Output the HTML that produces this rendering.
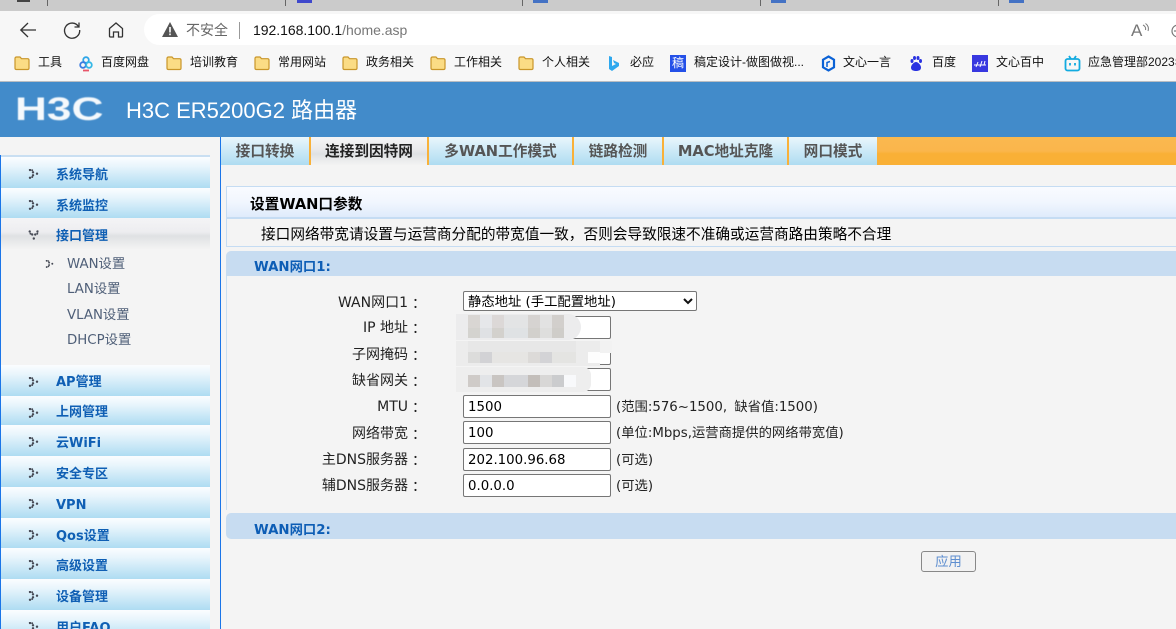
<!DOCTYPE html>
<html lang="zh-CN"><head><meta charset="utf-8"><title>H3C ER5200G2</title>
<style>
html,body{margin:0;padding:0;width:1176px;height:629px;overflow:hidden;background:#f4f4f4}
body{position:relative;font-family:"Liberation Sans","Noto Sans CJK SC",sans-serif;color:#000}
.a{position:absolute;white-space:nowrap}
.bm{position:absolute;top:54px;font-size:12px;line-height:17px;color:#111;white-space:nowrap}
.fo{position:absolute;top:55px}
.w{font-family:"DejaVu Sans","Noto Sans CJK SC",sans-serif}
.it{position:absolute;left:1px;width:209px;height:31px;background:linear-gradient(#fbfdff 0,#e8f5fc 30%,#aedcf2 100%);font:bold 13px/31px "DejaVu Sans","Noto Sans CJK SC",sans-serif;color:#0f5fb4}
.it span{position:absolute;left:55px;top:3px}
.it svg{position:absolute;left:27px;top:12px;filter:blur(.25px)}
.sub{position:absolute;left:67px;font:13.33px/18px "DejaVu Sans","Noto Sans CJK SC",sans-serif;color:#4f5f78;white-space:nowrap}
.tab{position:absolute;top:137px;height:28px;background:linear-gradient(#e9f6fc,#aedcf1);font:bold 14.67px/30px "DejaVu Sans","Noto Sans CJK SC",sans-serif;color:#555;text-align:center;border-right:2px solid #f9b139;box-sizing:border-box}
.lb{position:absolute;right:768px;font:14px/18px "DejaVu Sans","Noto Sans CJK SC",sans-serif;color:#222;white-space:nowrap}
.cl{position:absolute;left:412px;font:14px/18px "Noto Sans CJK SC",sans-serif;color:#222}
.in{position:absolute;left:463px;width:148px;height:23px;box-sizing:border-box;background:#fff;border:1px solid #767676;border-radius:2px;font:13.33px/23px "DejaVu Sans",sans-serif;padding-left:4px;color:#000}
.nt{position:absolute;left:616px;font:13.33px/18px "DejaVu Sans","Noto Sans CJK SC",sans-serif;color:#222;white-space:nowrap}
.b{position:absolute}
</style></head><body>
<svg width="0" height="0" style="position:absolute"><defs>
<symbol id="d" viewBox="0 0 11 10"><g fill="#464a55"><circle cx="2" cy="1" r="1.200"/><circle cx="4.200" cy="1.300" r="1"/><circle cx="5" cy="3.300" r="1.200"/><circle cx="9" cy="4.700" r="1.200"/><circle cx="5" cy="6.300" r="1.200"/><circle cx="2" cy="8.800" r="1.200"/><circle cx="4.200" cy="8" r="1"/></g></symbol>
<symbol id="f" viewBox="0 0 16 16"><path d="M1 3.500C1 2.700 1.600 2 2.400 2H6l1.500 1.700h6.100c.8 0 1.400.6 1.400 1.400v8c0 .8-.6 1.400-1.400 1.400H2.400c-.8 0-1.400-.6-1.400-1.400z" fill="#fbdc85" stroke="#c9962a" stroke-width="1.200"/></symbol>
</defs></svg>

<!-- tab strip -->
<div class="b" style="left:0;top:0;width:1176px;height:11px;background:#cbcbcb"></div>
<div class="b" style="left:47px;top:0;width:1px;height:6px;background:#666"></div>
<div class="b" style="left:285px;top:0;width:1px;height:6px;background:#666"></div>
<div class="b" style="left:522px;top:0;width:1px;height:6px;background:#666"></div>
<div class="b" style="left:760px;top:0;width:1px;height:6px;background:#666"></div>
<div class="b" style="left:998px;top:0;width:1px;height:6px;background:#666"></div>
<div class="b" style="left:17px;top:0;width:13px;height:2px;background:#444"></div>
<div class="b" style="left:297px;top:0;width:15px;height:3px;background:#3f48cc"></div>
<div class="b" style="left:533px;top:0;width:15px;height:3px;background:#4472c4"></div>
<div class="b" style="left:771px;top:0;width:15px;height:3px;background:#4472c4"></div>
<div class="b" style="left:1009px;top:0;width:15px;height:3px;background:#4472c4"></div>

<!-- toolbar -->
<div class="b" style="left:0;top:11px;width:1176px;height:34px;background:#f7f7f7"></div>
<div class="b" style="left:144px;top:14px;width:1040px;height:31px;background:#fff;border-radius:16px 0 0 16px"></div>
<svg class="b" style="left:18px;top:20px" width="20" height="20" viewBox="0 0 20 20" fill="none" stroke="#333" stroke-width="1.300"><path d="M18 10H3M10 3l-7.200 7 7.200 7"/></svg>
<svg class="b" style="left:62px;top:20px" width="20" height="20" viewBox="0 0 20 20" fill="none" stroke="#333" stroke-width="1.300"><path d="M16.500 6.500A7.600 7.600 0 1 0 17.700 10"/><path d="M17 2.500v4.500h-4.500"/></svg>
<svg class="b" style="left:107px;top:21px" width="18" height="18" viewBox="0 0 18 18" fill="none" stroke="#333" stroke-width="1.300"><path d="M2.500 7.500L9 2l6.500 5.500V15a1 1 0 0 1-1 1h-3v-5h-5v5h-3a1 1 0 0 1-1-1z"/></svg>
<svg class="b" style="left:162px;top:22px" width="16" height="15" viewBox="0 0 16 15"><path d="M8 0l8 15H0z" fill="#555"/><rect x="7.200" y="5" width="1.600" height="5.500" fill="#fff"/><rect x="7.200" y="11.500" width="1.600" height="1.700" fill="#fff"/></svg>
<div class="a" style="left:186px;top:21px;font-size:14px;line-height:18px;color:#666">不安全</div>
<div class="b" style="left:239px;top:22px;width:1px;height:17px;background:#999"></div>
<div class="a" style="left:253px;top:21px;font-size:14px;line-height:18px;letter-spacing:-.03px;color:#111">192.168.100.1<span style="color:#777">/home.asp</span></div>
<div class="a" style="left:1131px;top:21px;font-size:17px;line-height:20px;color:#777">A</div>
<svg class="b" style="left:1142px;top:23px" width="8" height="11" viewBox="0 0 8 11" fill="none" stroke="#777"><path d="M1 2c2 1 3 3 2.500 5M3.500 0.500c2.500 1.500 3.500 4.500 2.500 7.500"/></svg>
<svg class="b" style="left:1171px;top:23px" width="5" height="16" viewBox="0 0 5 16" fill="none" stroke="#777" stroke-width="1.200"><circle cx="7" cy="8" r="6"/><path d="M3 8h4"/></svg>

<!-- bookmarks -->
<div class="b" style="left:0;top:45px;width:1176px;height:36px;background:#f7f7f7"></div>
<div class="b" style="left:0;top:81px;width:1176px;height:1px;background:#b9bdc2"></div>
<svg class="fo" style="left:14px" width="16" height="16"><use href="#f"/></svg>
<svg class="fo" style="left:166px" width="16" height="16"><use href="#f"/></svg>
<svg class="fo" style="left:254px" width="16" height="16"><use href="#f"/></svg>
<svg class="fo" style="left:342px" width="16" height="16"><use href="#f"/></svg>
<svg class="fo" style="left:430px" width="16" height="16"><use href="#f"/></svg>
<svg class="fo" style="left:518px" width="16" height="16"><use href="#f"/></svg>
<svg class="b" style="left:78px;top:55px" width="16" height="17" viewBox="0 0 16 17" fill="none" stroke-width="1.800"><circle cx="8" cy="5" r="2.800" stroke="#2ea6e8"/><circle cx="5" cy="10" r="2.800" stroke="#3a7be0"/><circle cx="11" cy="10" r="2.800" stroke="#35b8e6"/><path d="M5 15.500h6" stroke="#e8556a"/></svg>
<svg class="b" style="left:608px;top:55px" width="12" height="17" viewBox="0 0 12 17"><path d="M1 1l3 1v9l4-2-2-1-1-3 6 3v3l-7 5-3-2z" fill="#2ea8ee"/></svg>
<div class="b" style="left:670px;top:55px;width:16px;height:17px;background:#2450e8;color:#fff;font-size:12px;line-height:17px;text-align:center">稿</div>
<svg class="b" style="left:821px;top:55px" width="15" height="17" viewBox="0 0 15 17" fill="none"><path d="M7.500 1.500l5.500 3.200v7.600l-5.500 3.200L2 12.300V4.700z" stroke="#0b62d6" stroke-width="2.200"/><path d="M6 12V7.500l3-1" stroke="#0b62d6" stroke-width="1.500"/></svg>
<svg class="b" style="left:909px;top:55px" width="14" height="17" viewBox="0 0 14 17" fill="#2932e1"><ellipse cx="3" cy="6" rx="1.500" ry="2"/><ellipse cx="5.500" cy="3" rx="1.500" ry="2"/><ellipse cx="9" cy="3" rx="1.500" ry="2"/><ellipse cx="11.500" cy="6" rx="1.500" ry="2"/><path d="M7 7c-2 0-5 3-5 5.500S4 16 7 16s5-1 5-3.500S9 7 7 7z"/></svg>
<div class="b" style="left:972px;top:55px;width:16px;height:17px;background:#3838e0"></div>
<svg class="b" style="left:972px;top:55px" width="16" height="17" viewBox="0 0 16 17" fill="none" stroke="#fff"><path d="M2 10h12M4 12l2-5M8 12l2-6M12 10l1-4"/></svg>
<svg class="b" style="left:1064px;top:55px" width="17" height="17" viewBox="0 0 17 17" fill="none" stroke="#12abe0" stroke-width="1.800"><rect x="1.500" y="4" width="14" height="11.500" rx="2"/><path d="M5 1l2 3M12 1l-2 3"/><path d="M6 8v2.500M11 8v2.500"/></svg>
<div class="bm" style="left:38px">工具</div>
<div class="bm" style="left:101px">百度网盘</div>
<div class="bm" style="left:190px">培训教育</div>
<div class="bm" style="left:278px">常用网站</div>
<div class="bm" style="left:366px">政务相关</div>
<div class="bm" style="left:454px">工作相关</div>
<div class="bm" style="left:542px">个人相关</div>
<div class="bm" style="left:630px">必应</div>
<div class="bm" style="left:694px">稿定设计-做图做视...</div>
<div class="bm" style="left:843px">文心一言</div>
<div class="bm" style="left:932px">百度</div>
<div class="bm" style="left:996px">文心百中</div>
<div class="bm" style="left:1088px">应急管理部2023年</div>

<!-- header -->
<div class="b" style="left:0;top:82px;width:1176px;height:55px;background:#428bca"></div>
<div class="a" style="left:15px;top:91px;font:bold 32px/37px 'Liberation Sans',sans-serif;color:#fff;transform-origin:0 0;transform:scaleX(1.38);filter:blur(.4px);opacity:.95">H3C</div>
<div class="a" style="left:126px;top:96px;font-size:22px;line-height:29px;color:#fff">H3C ER5200G2 路由器</div>

<!-- sidebar -->
<div class="b" style="left:0;top:155px;width:1px;height:474px;background:#1a75e8"></div>
<div class="b" style="left:220px;top:137px;width:1px;height:492px;background:#1a75e8"></div>
<div class="b" style="left:1px;top:155px;width:209px;height:2px;background:#c9dff2"></div>
<div class="it" style="top:157px"><svg width="11" height="10"><use href="#d"/></svg><span>系统导航</span></div>
<div class="it" style="top:188px;height:30px"><svg width="11" height="10"><use href="#d"/></svg><span>系统监控</span></div>
<div class="it" style="top:218px;background:linear-gradient(#f4f4f6 0,#ededf0 45%,#dfe1e3 58%,#f3f3f3 100%)"><svg width="11" height="10" style="transform:rotate(90deg)"><use href="#d"/></svg><span>接口管理</span></div>
<svg class="b" style="left:44px;top:259px;transform:scale(.8)" width="11" height="10"><use href="#d"/></svg>
<div class="sub" style="top:256px">WAN设置</div>
<div class="sub" style="top:281px">LAN设置</div>
<div class="sub" style="top:307px">VLAN设置</div>
<div class="sub" style="top:332px">DHCP设置</div>
<div class="it" style="top:365px"><svg width="11" height="10"><use href="#d"/></svg><span style="top:2px">AP管理</span></div>
<div class="it" style="top:396px;height:29px"><svg width="11" height="10"><use href="#d"/></svg><span style="top:1px">上网管理</span></div>
<div class="it" style="top:425px"><svg width="11" height="10"><use href="#d"/></svg><span>云WiFi</span></div>
<div class="it" style="top:456px"><svg width="11" height="10"><use href="#d"/></svg><span>安全专区</span></div>
<div class="it" style="top:487px"><svg width="11" height="10"><use href="#d"/></svg><span>VPN</span></div>
<div class="it" style="top:518px;height:30px"><svg width="11" height="10"><use href="#d"/></svg><span>Qos设置</span></div>
<div class="it" style="top:548px"><svg width="11" height="10"><use href="#d"/></svg><span>高级设置</span></div>
<div class="it" style="top:579px"><svg width="11" height="10"><use href="#d"/></svg><span>设备管理</span></div>
<div class="it" style="top:610px"><svg width="11" height="10"><use href="#d"/></svg><span>用户FAQ</span></div>

<!-- tabs -->
<div class="b" style="left:877px;top:137px;width:299px;height:28px;background:linear-gradient(#fab84f 0,#fab64c 50%,#f9b036 60%,#f9b036 100%)"></div>
<div class="tab" style="left:221px;width:90px">接口转换</div>
<div class="tab" style="left:311px;width:118px;color:#222;background:linear-gradient(#f5f5f6 0,#e9e9eb 45%,#dfe1e3 60%,#f3f3f3 100%)">连接到因特网</div>
<div class="tab" style="left:429px;width:145px">多WAN工作模式</div>
<div class="tab" style="left:574px;width:90px">链路检测</div>
<div class="tab" style="left:664px;width:125px">MAC地址克隆</div>
<div class="tab" style="left:789px;width:88px;border-right:0;border-radius:0 4px 0 0">网口模式</div>

<!-- content -->
<div class="b" style="left:226px;top:186px;width:950px;height:33px;box-sizing:border-box;border:1px solid #c5dcf3;border-bottom-width:2px;border-right:0;background:linear-gradient(#f9fbff,#f1f6fe 50%,#dfebfb)"></div>
<div class="a w" style="left:250px;top:195px;font-weight:bold;font-size:14.67px;line-height:20px;color:#000">设置WAN口参数</div>
<div class="b" style="left:226px;top:219px;width:950px;height:28px;box-sizing:border-box;border:1px solid #c5dcf3;border-top:0;border-right:0"></div>
<div class="a" style="left:261px;top:225px;font-size:14.67px;line-height:20px;color:#000">接口网络带宽请设置与运营商分配的带宽值一致，否则会导致限速不准确或运营商路由策略不合理</div>

<div class="b" style="left:226px;top:251px;width:950px;height:25px;background:#c7dcf1;border-radius:5px 0 0 0"></div>
<div class="a w" style="left:254px;top:259px;font-weight:bold;font-size:13.33px;line-height:18px;color:#0d5db5">WAN网口1:</div>
<div class="b" style="left:226px;top:276px;width:1px;height:234px;background:#c9dff2"></div>
<div class="b" style="left:226px;top:513px;width:950px;height:26px;background:#c7dcf1;border-radius:5px 0 0 5px"></div>
<div class="a w" style="left:254px;top:522px;font-weight:bold;font-size:13.33px;line-height:18px;color:#0d5db5">WAN网口2:</div>

<!-- form -->
<div class="lb" style="top:294px">WAN网口1</div><div class="cl" style="top:294px">：</div>
<div class="lb" style="top:319px">IP 地址</div><div class="cl" style="top:319px">：</div>
<div class="lb" style="top:346px">子网掩码</div><div class="cl" style="top:346px">：</div>
<div class="lb" style="top:372px">缺省网关</div><div class="cl" style="top:372px">：</div>
<div class="lb" style="top:398px">MTU</div><div class="cl" style="top:398px">：</div>
<div class="lb" style="top:425px">网络带宽</div><div class="cl" style="top:425px">：</div>
<div class="lb" style="top:451px">主DNS服务器</div><div class="cl" style="top:451px">：</div>
<div class="lb" style="top:477px">辅DNS服务器</div><div class="cl" style="top:477px">：</div>

<div class="b" style="left:463px;top:291px;width:234px;height:20px;box-sizing:border-box;background:#fff;border:1px solid #767676;border-radius:2px"></div>
<div class="a" style="left:468px;top:294px;font:13.33px/18px 'DejaVu Sans','Noto Sans CJK SC',sans-serif;color:#000">静态地址 (手工配置地址)</div>
<svg class="b" style="left:683px;top:298px" width="10" height="7" viewBox="0 0 10 7" fill="none" stroke="#111" stroke-width="2"><path d="M1 1l4 4 4-4"/></svg>

<div class="in" style="top:316px"></div>
<div class="in" style="top:342px"></div>
<div class="in" style="top:368px"></div>
<div class="in" style="top:395px">1500</div>
<div class="in" style="top:421px">100</div>
<div class="in" style="top:448px">202.100.96.68</div>
<div class="in" style="top:474px">0.0.0.0</div>

<!-- blurred redactions -->
<div class="b" style="left:456px;top:314px;width:125px;height:26px;background:#ececed;border-radius:0 13px 13px 0"></div>
<div class="b" style="left:468px;top:315px;width:12px;height:13px;background:#d9d6d3"></div>
<div class="b" style="left:480px;top:315px;width:12px;height:13px;background:#e6e7ea"></div>
<div class="b" style="left:492px;top:315px;width:12px;height:13px;background:#dcd8d7"></div>
<div class="b" style="left:504px;top:315px;width:24px;height:13px;background:#e3e4e5"></div>
<div class="b" style="left:528px;top:315px;width:12px;height:13px;background:#d6d3d1"></div>
<div class="b" style="left:540px;top:315px;width:12px;height:13px;background:#e2e2e2"></div>
<div class="b" style="left:552px;top:315px;width:12px;height:13px;background:#d2cfcc"></div>
<div class="b" style="left:468px;top:328px;width:12px;height:10px;background:#d4d3cf"></div>
<div class="b" style="left:480px;top:328px;width:12px;height:10px;background:#dfe1e4"></div>
<div class="b" style="left:492px;top:328px;width:12px;height:10px;background:#d3d1cd"></div>
<div class="b" style="left:504px;top:328px;width:24px;height:10px;background:#dfe2e4"></div>
<div class="b" style="left:528px;top:328px;width:12px;height:10px;background:#d2d0cc"></div>
<div class="b" style="left:540px;top:328px;width:12px;height:10px;background:#dededd"></div>
<div class="b" style="left:552px;top:328px;width:12px;height:10px;background:#cfcdc9"></div>

<div class="b" style="left:456px;top:341px;width:144px;height:25px;background:#ececec"></div>
<div class="b" style="left:600px;top:341px;width:12px;height:12px;background:#f2f2f2"></div>
<div class="b" style="left:468px;top:341px;width:108px;height:11px;background:#e7e7e7"></div>
<div class="b" style="left:468px;top:352px;width:12px;height:11px;background:#dcdcdb"></div>
<div class="b" style="left:480px;top:352px;width:12px;height:11px;background:#d2d2d5"></div>
<div class="b" style="left:492px;top:352px;width:36px;height:11px;background:#e6e5e3"></div>
<div class="b" style="left:528px;top:352px;width:12px;height:11px;background:#dcdad8"></div>
<div class="b" style="left:540px;top:352px;width:12px;height:11px;background:#d3d3d6"></div>
<div class="b" style="left:552px;top:352px;width:24px;height:11px;background:#e4e4e2"></div>
<div class="b" style="left:588px;top:352px;width:12px;height:11px;background:#fdfdfd"></div>

<div class="b" style="left:456px;top:367px;width:135px;height:25px;background:#eeeeee;border-radius:0 8px 8px 0"></div>
<div class="b" style="left:468px;top:375px;width:12px;height:12px;background:#cfcbc8"></div>
<div class="b" style="left:480px;top:375px;width:12px;height:12px;background:#e2e4e7"></div>
<div class="b" style="left:492px;top:375px;width:12px;height:12px;background:#c9c5c2"></div>
<div class="b" style="left:504px;top:375px;width:24px;height:12px;background:#d5d6d9"></div>
<div class="b" style="left:528px;top:375px;width:12px;height:12px;background:#c3beba"></div>
<div class="b" style="left:540px;top:375px;width:12px;height:12px;background:#d8d7d6"></div>
<div class="b" style="left:552px;top:375px;width:12px;height:12px;background:#cbccce"></div>
<div class="b" style="left:564px;top:375px;width:12px;height:12px;background:#f8f9fb"></div>

<div class="nt" style="top:399px;word-spacing:3px">(范围:576~1500, 缺省值:1500)</div>
<div class="nt" style="top:425px">(单位:Mbps,运营商提供的网络带宽值)</div>
<div class="nt" style="top:452px">(可选)</div>
<div class="nt" style="top:478px">(可选)</div>

<div class="b" style="left:921px;top:551px;width:55px;height:21px;box-sizing:border-box;background:#f2f2f2;border:1px solid #888;border-radius:3px;font-size:13.33px;line-height:19px;text-align:center;color:#5f8fd0">应用</div>
</body></html>
